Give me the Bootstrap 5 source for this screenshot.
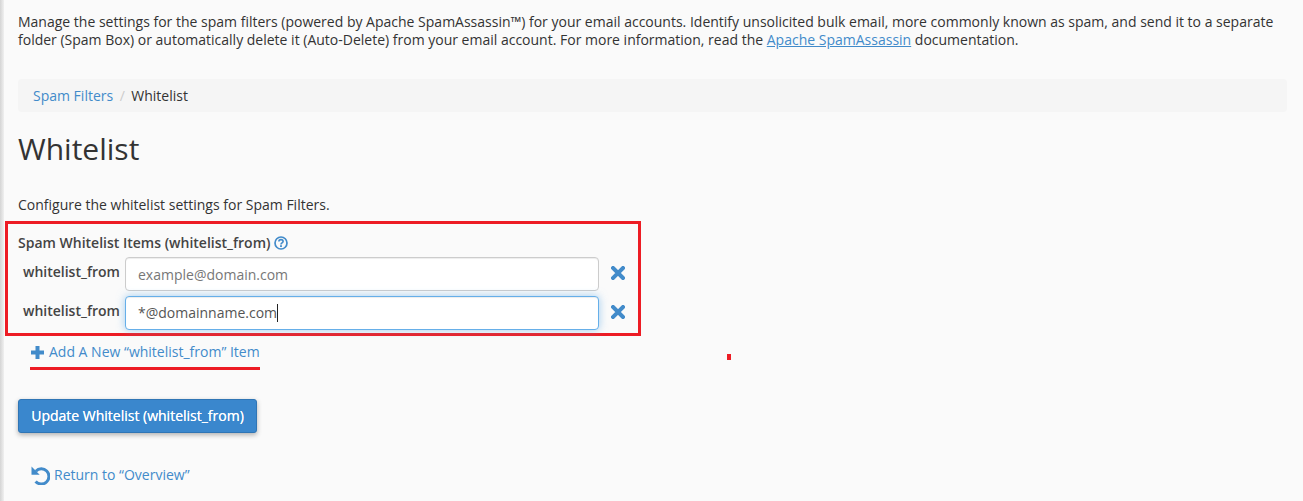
<!DOCTYPE html>
<html lang="en">
<head>
    <meta charset="UTF-8">
    <title>Whitelist</title>
    <link href="https://cdn.jsdelivr.net/npm/bootstrap@5.3.3/dist/css/bootstrap.min.css" rel="stylesheet">
    <style>
        html, body { height: 100%; }
        body { position: relative; overflow: hidden; background: #fafafa; color: #333; font-family: "Open Sans", sans-serif; font-size: 14px; line-height: 20px; }
        a { color: #428bca; text-decoration: none; }
        .side-edge { position: absolute; left: 0; top: 0; bottom: 0; width: 4px; background: linear-gradient(to right, #d4d4d4, #f0f0f0); }
        .page-wrap { padding: 13px 16px 0 18px; }
        .intro-text { margin: 0 0 28px; height: 38px; line-height: 18px; }
        .intro-text a { text-decoration: underline; }
        .crumb-bar { height: 33px; margin: 0; padding: 0 15px; background: #f5f5f5; border-radius: 4px; align-items: center; --bs-breadcrumb-divider-color: #ccc; --bs-breadcrumb-item-active-color: #333; --bs-breadcrumb-margin-bottom: 0; --bs-breadcrumb-item-padding-x: 6.5px; }
        .page-title { margin: 20px 0 0; font-size: 30px; line-height: 33px; font-weight: 400; font-family: "Open Sans", sans-serif; }
        .sub-text { margin: 30px 0 0; height: 20px; }
        .red-box { width: 636px; height: 115px; margin: 6px 0 0 -13px; padding: 9px 0 0 10px; border: 3px solid #ed1c24; }
        .field-head { font-weight: 600; color: #444; height: 20px; }
        .field-row { display: flex; align-items: center; height: 34px; margin-top: 5px; }
        .field-head + .field-row { margin-top: 4px; }
        .field-name { width: 107px; padding-left: 5px; font-weight: 600; color: #444; margin-top: -4px; flex: none; }
        .field-input { width: 474px; height: 34px; flex: none; padding: 6px 12px; font-size: 14px; color: #555; background: #fff; border: 1px solid #ccc; border-radius: 4px; box-shadow: inset 0 1px 1px rgba(0,0,0,.075); }
        .field-input::placeholder { color: #777; opacity: 1; }
        .field-input:focus, .field-active { outline: 0; border-color: #66afe9; box-shadow: inset 0 1px 1px rgba(0,0,0,.075), 0 0 8px rgba(102,175,233,.6); }
        .field-caret { width: 1px; height: 18px; background: #222; display: inline-block; vertical-align: -4px; }
        .remove-x { margin: -2px 0 0 12px; display: block; flex: none; }
        .add-item { display: flex; align-items: flex-start; gap: 5px; white-space: nowrap; margin: 5px 0 0 12px; padding: 1px 1px 0; border-bottom: 3px solid #ed1c24; height: 29px; width: 230px; }
        .add-item svg { margin-top: 4px; flex: none; }
        .update-btn { display: block; margin-top: 29px; height: 34px; width: 239px; padding: 0; background: #3a87cd; border: 1px solid #2f75b5; border-radius: 3px; color: #fff; font-size: 14px; font-weight: 500; text-shadow: 0 0 .4px #fff; box-shadow: 0 2px 5px rgba(0,0,0,.3); }
        .back-link { display: flex; align-items: center; gap: 4px; margin: 32px 0 0 13px; height: 20px; }
        .red-dot { position: absolute; left: 727px; top: 354px; width: 4px; height: 6px; background: #ed1c24; }
    </style>
</head>
<body>
    <div class="side-edge"></div>
    <div class="page-wrap">
        <p class="intro-text">Manage the settings for the spam filters (powered by Apache SpamAssassin™) for your email accounts. Identify unsolicited bulk email, more commonly known as spam, and send it to a separate folder (Spam Box) or automatically delete it (Auto-Delete) from your email account. For more information, read the <a href="#">Apache SpamAssassin</a> documentation.</p>

        <nav aria-label="breadcrumb">
            <ol class="breadcrumb crumb-bar">
                <li class="breadcrumb-item"><a href="#">Spam Filters</a></li>
                <li class="breadcrumb-item active" aria-current="page">Whitelist</li>
            </ol>
        </nav>

        <h1 class="page-title">Whitelist</h1>
        <p class="sub-text">Configure the whitelist settings for Spam Filters.</p>

        <div class="red-box">
            <div class="field-head d-flex align-items-center gap-1">Spam Whitelist Items (whitelist_from)
                <svg width="14" height="14" viewBox="0 0 14 14"><circle cx="7" cy="7" r="6" fill="none" stroke="#428bca" stroke-width="1.7"/><path d="M4.9 5.6C4.9 4.4 5.9 3.6 7 3.6s2.1 .7 2.1 1.8c0 1.5-2.1 1.4-2.1 3" fill="none" stroke="#428bca" stroke-width="1.6"/><rect x="6.1" y="9.2" width="1.8" height="1.8" fill="#428bca"/></svg>
            </div>
            <div class="field-row">
                <span class="field-name">whitelist_from</span>
                <input class="field-input" type="text" placeholder="example@domain.com">
                <svg class="remove-x" width="14" height="14" viewBox="0 0 14 14"><path d="M2 2l10 10M12 2L2 12" stroke="#428bca" stroke-width="4" stroke-linecap="square"/></svg>
            </div>
            <div class="field-row">
                <span class="field-name">whitelist_from</span>
                <div class="field-input field-active">*@domainname.com<span class="field-caret"></span></div>
                <svg class="remove-x" width="14" height="14" viewBox="0 0 14 14"><path d="M2 2l10 10M12 2L2 12" stroke="#428bca" stroke-width="4" stroke-linecap="square"/></svg>
            </div>
        </div>

        <a href="#" class="add-item">
            <svg width="13" height="13" viewBox="0 0 13 13"><path d="M0 6.5h13M6.5 0v13" stroke="#428bca" stroke-width="4"/></svg>
            Add A New “whitelist_from” Item
        </a>

        <button type="button" class="update-btn">Update Whitelist (whitelist_from)</button>

        <a href="#" class="back-link">
            <svg width="19" height="19" viewBox="0 0 19 19"><path d="M4.8 5.2A7.6 7.6 0 1 1 4.6 15.4" fill="none" stroke="#428bca" stroke-width="3"/><path d="M.5 .5v8.2h8.2z" fill="#428bca"/></svg>
            Return to “Overview”
        </a>
    </div>
    <div class="red-dot"></div>
    <script src="https://cdn.jsdelivr.net/npm/bootstrap@5.3.3/dist/js/bootstrap.bundle.min.js"></script>
</body>
</html>
